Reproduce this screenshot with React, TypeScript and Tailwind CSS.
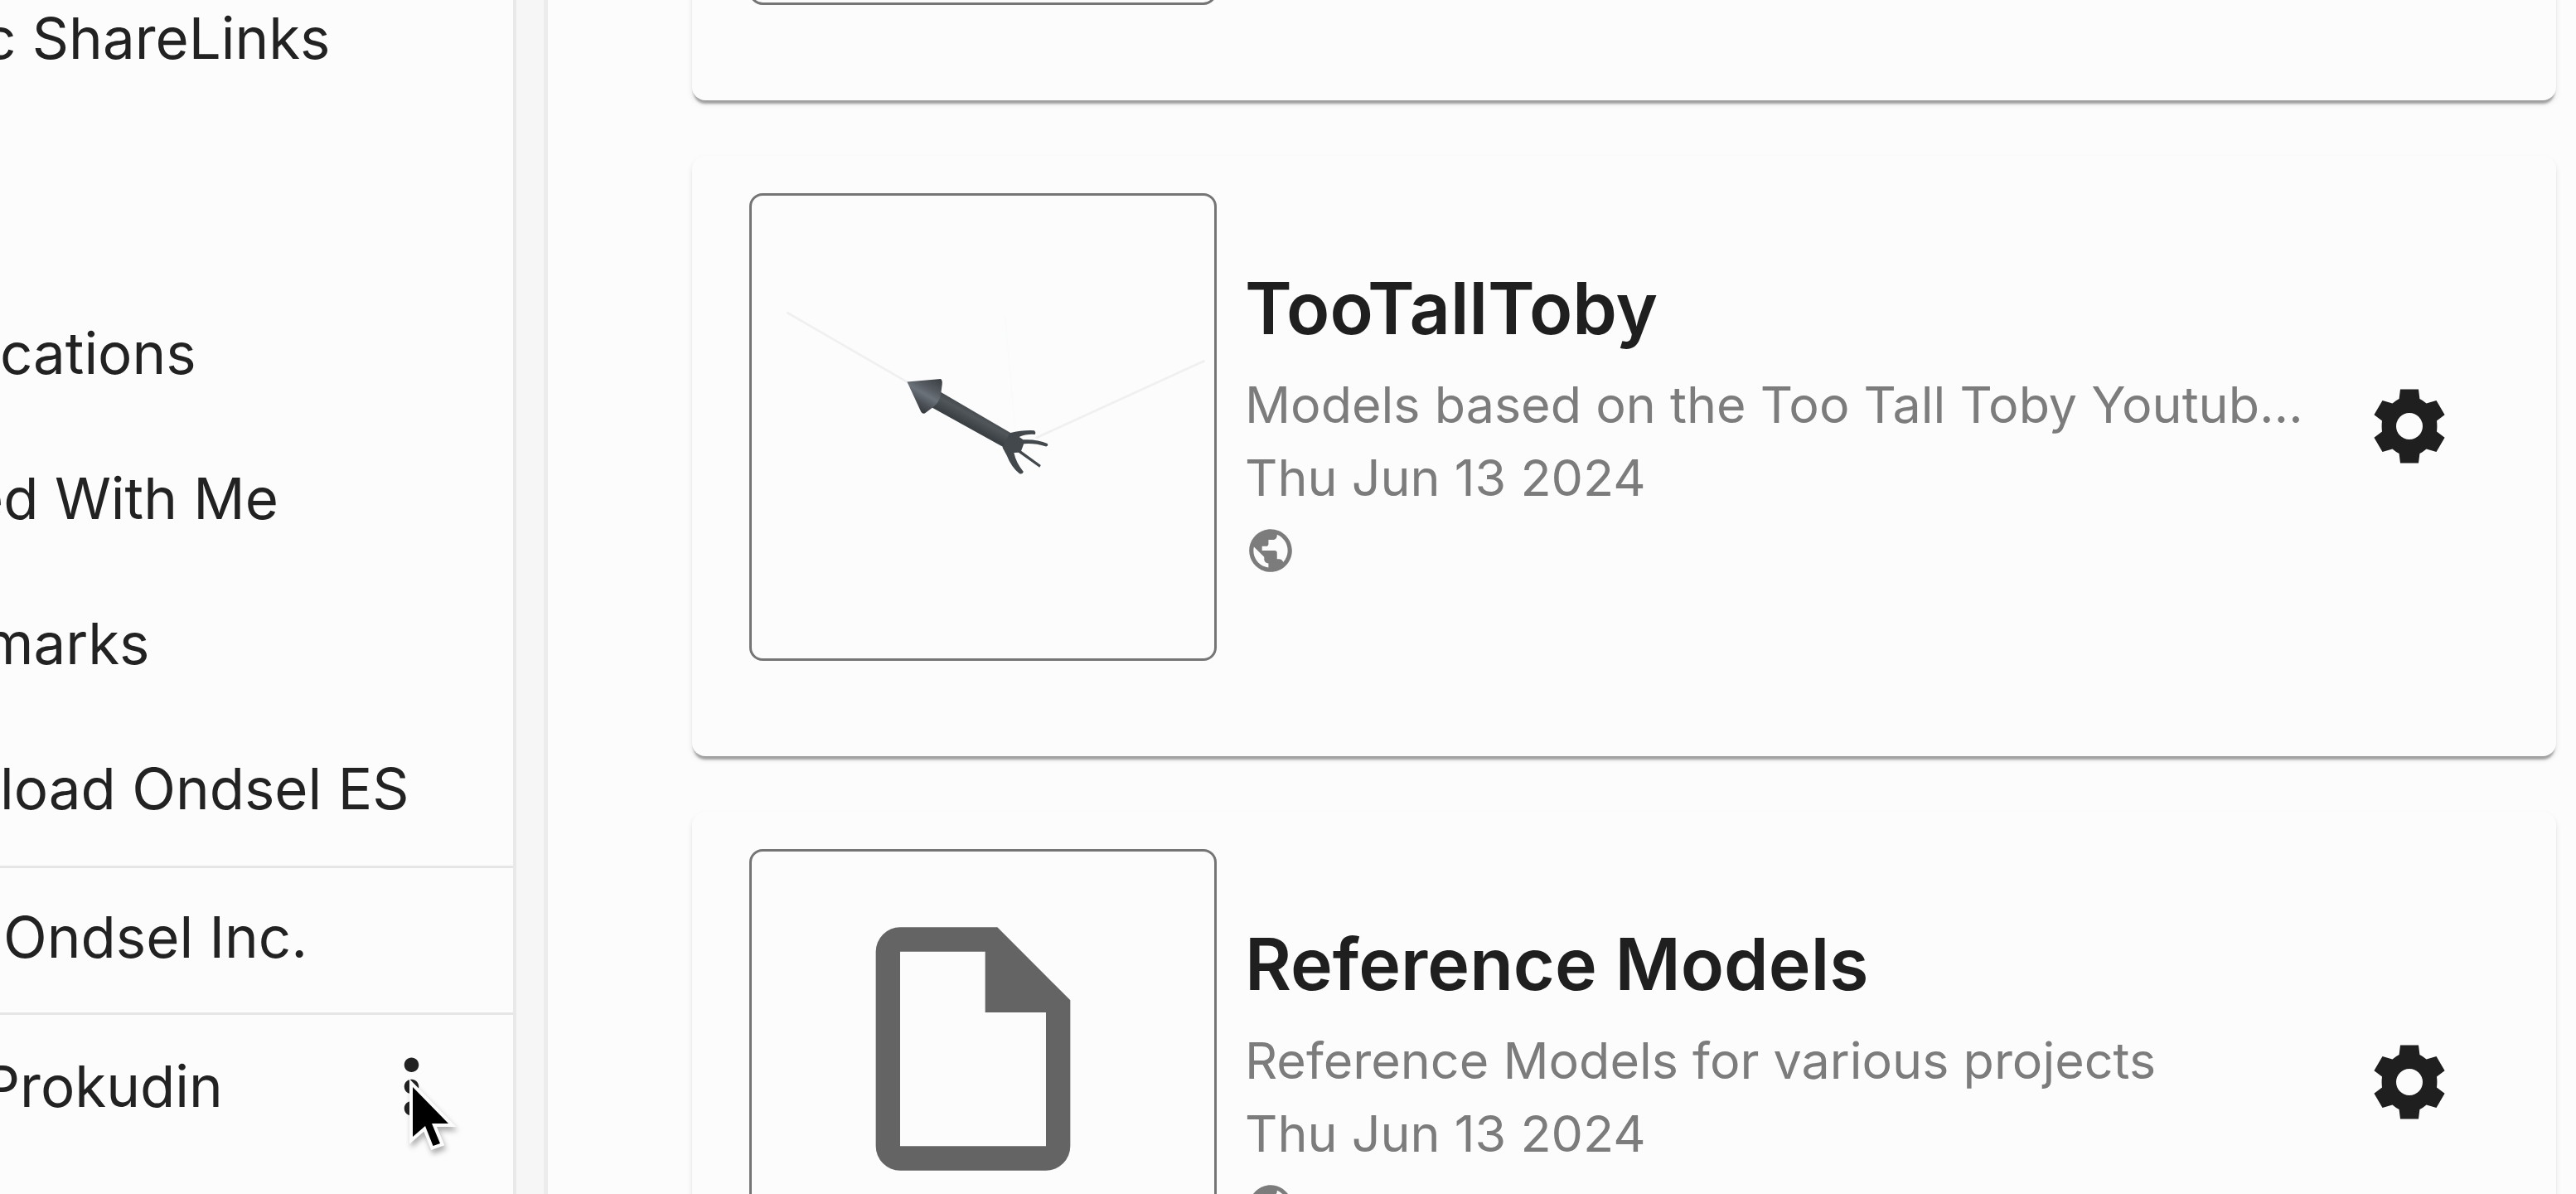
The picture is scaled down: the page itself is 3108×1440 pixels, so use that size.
import type { ReactNode } from 'react';
import { MdMoreVert, MdPublic } from 'react-icons/md';

const links = [
  { label: 'cations', indent: 'ml-0' },
  { label: 'ed With Me', indent: '-ml-9' },
  { label: 'marks', indent: '-ml-5' },
  { label: 'load Ondsel ES', indent: 'ml-0' },
];

function CogIcon() {
  return (
    <svg viewBox="-50 -50 100 100" className="size-[100px]" fill="currentColor" aria-hidden="true">
      <path
        fillRule="evenodd"
        d="M-11-44.5H11L12.4-33Q16.5-31 20.5-27.5L32.5-31 42.6-13.7 33-6.5Q33.8 0 33 6.5L42.6 13.7 32.5 31 20.5 27.5Q16.5 31 12.4 33L11 44.5H-11L-12.4 33Q-16.5 31-20.5 27.5L-32.5 31-42.6 13.7-33 6.5Q-33.8 0-33-6.5L-42.6-13.7-32.5-31-20.5-27.5Q-16.5-31-12.4-33ZM0-16A16 16 0 1 0 0 16A16 16 0 1 0 0-16Z"
      />
    </svg>
  );
}

function FileIcon() {
  return (
    <svg viewBox="0 0 24 24" className="mt-[62px] ml-[91px] size-[352px] text-[#646464]" fill="currentColor" aria-hidden="true">
      <path fillRule="evenodd" d="M6 2H14L20 8V20A2 2 0 0 1 18 22H6A2 2 0 0 1 4 20V4A2 2 0 0 1 6 2ZM6 4V20H18V9H13V4Z" />
    </svg>
  );
}

function ArrowModel() {
  return (
    <svg viewBox="68 66 1411 1411" className="size-full" role="img" aria-label="TooTallToby model preview">
      <defs>
        <linearGradient id="shaft" gradientUnits="userSpaceOnUse" x1="765" y1="715" x2="735" y2="770">
          <stop offset="0" stopColor="#3c4246" />
          <stop offset="0.5" stopColor="#50565a" />
          <stop offset="1" stopColor="#3a4044" />
        </linearGradient>
        <linearGradient id="head" gradientUnits="userSpaceOnUse" x1="648" y1="628" x2="590" y2="728">
          <stop offset="0" stopColor="#3a3f43" />
          <stop offset="0.35" stopColor="#555b61" />
          <stop offset="0.55" stopColor="#6c727a" />
          <stop offset="0.8" stopColor="#4a5055" />
          <stop offset="1" stopColor="#363b3f" />
        </linearGradient>
      </defs>
      <path d="M175 422L545 636M935 805L1450 569" stroke="#f0f0f1" strokeWidth="7" fill="none" />
      <path d="M840 430L872 780" stroke="#f9fbfb" strokeWidth="5" fill="none" />
      <path d="M640 662L862 792 838 834 618 712Z" fill="url(#shaft)" />
      <path d="M542 634L644 625Q650 628 649 640L645 672Q640 695 624 709L596 730Q588 732 584 724Z" fill="url(#head)" />
      <path d="M855 790Q895 780 930 782 936 788 932 794 905 792 884 802L896 810Q940 808 970 822 974 828 966 831 930 820 898 823L890 844 950 888 946 895 882 849 868 850Q874 880 897 908 894 916 885 914 860 894 846 858L833 834Z" fill="#42484c" />
    </svg>
  );
}

function Card({ preview, children }: { preview?: ReactNode; children?: ReactNode }) {
  return (
    <article className="flex h-[724px] shrink-0 items-start gap-[34px] rounded-2xl bg-[#fcfcfc] pt-[45px] pr-[127px] pl-[69px] shadow-[0_6px_3px_-2px_rgba(0,0,0,0.32),0_4px_7px_rgba(0,0,0,0.1)]">
      <div className="size-[564px] shrink-0 rounded-2xl border-[3px] border-[#757575]">{preview}</div>
      {children}
    </article>
  );
}

function Details({ title, text, date }: { title: string; text: string; date: string }) {
  return (
    <>
      <div className="min-w-0 grow pt-[67px] text-[61px] leading-[88px] text-[#7c7c7c]">
        <h2 className="text-[86px] leading-[144px] font-semibold text-[#1f1f1f]">{title}</h2>
        <p className="whitespace-nowrap">{text}</p>
        <p>{date}</p>
        <p className="flex h-[88px] items-center">
          <MdPublic className="size-[62px]" title="Public" />
        </p>
      </div>
      <button type="button" aria-label={`Settings for ${title}`} className="mt-[231px] shrink-0 text-[#1f1f1f]">
        <CogIcon />
      </button>
    </>
  );
}

function Pointer() {
  return (
    <svg viewBox="-8 -10 70 100" className="pointer-events-none absolute top-[43px] left-[46px] w-[70px] drop-shadow-[2px_5px_3px_rgba(0,0,0,0.3)]" aria-hidden="true">
      <path d="M0 0V60L15 47 24.500 71 33 68 23 44H43Z" fill="#000" stroke="#fcfcfc" strokeWidth="8" paintOrder="stroke" />
    </svg>
  );
}

export default function App() {
  return (
    <div className="flex h-screen overflow-hidden bg-[#fcfcfc] font-['Inter',sans-serif] text-[#222222]">
      <nav className="flex w-[623px] shrink-0 flex-col overflow-hidden border-r-4 border-[#e9e9e9] text-[69px] leading-[88px] whitespace-nowrap">
        <a href="#sharelinks" className="-mt-[42px] mb-[205px] flex h-[175px] shrink-0 items-center">
          <span className="-ml-5">c ShareLinks</span>
        </a>
        {links.map(({ label, indent }) => (
          <a key={label} href="#" className="flex h-[175px] shrink-0 items-center">
            <span className={indent}>{label}</span>
          </a>
        ))}
        <a href="#organization" className="mt-1.5 flex h-[177px] shrink-0 items-center border-t-[3px] border-[#e6e6e6] pb-2 pl-1">
          Ondsel Inc.
        </a>
        <div className="flex h-[175px] shrink-0 items-center justify-between border-t-[3px] border-[#e6e6e6] pr-[70px]">
          <span className="-ml-5">Prokudin</span>
          <button type="button" aria-label="Account menu" className="relative">
            <MdMoreVert className="size-[105px]" />
            <Pointer />
          </button>
        </div>
      </nav>
      <div className="w-[38px] shrink-0 border-r-[5px] border-[#ececec] bg-[#f6f6f6]" />
      <main className="flex min-w-0 grow flex-col gap-[67px] pr-6 pl-[174px]">
        <div className="-mt-[603px]">
          <Card />
        </div>
        <Card preview={<ArrowModel />}>
          <Details title="TooTallToby" text="Models based on the Too Tall Toby Youtub…" date="Thu Jun 13 2024" />
        </Card>
        <Card preview={<FileIcon />}>
          <Details title="Reference Models" text="Reference Models for various projects" date="Thu Jun 13 2024" />
        </Card>
      </main>
    </div>
  );
}
